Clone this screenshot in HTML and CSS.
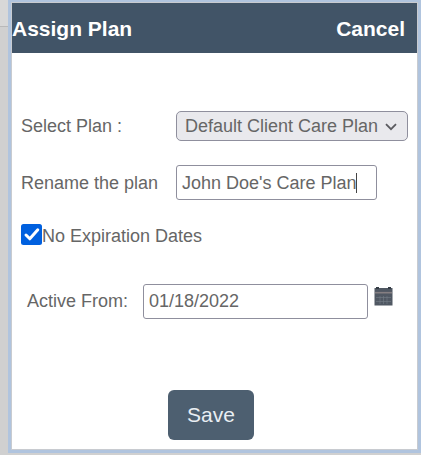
FILE: index.html
```html
<!DOCTYPE html>
<html lang="en">
<head>
  <meta charset="UTF-8" />
  <meta name="viewport" content="width=device-width,initial-scale=1.0"/>
  <title>Assign Plan</title>
  <link rel="stylesheet" href="styles.css">
</head>
<body>
  <div class="modal">
    <div class="modal-header">
      <span>Assign Plan</span>
      <span class="cancel">Cancel</span>
    </div>
    <form class="modal-body">
      <div class="row row-select">
        <label for="plan">Select Plan :</label>
        <div class="select-wrap">
          <select id="plan">
            <option>Default Client Care Plan</option>
          </select>
          <svg class="chevron" width="12" height="8" viewBox="0 0 12 8">
            <path d="M1 1.2 L6 6.2 L11 1.2" fill="none" stroke="#5b5b60" stroke-width="1.8"/>
          </svg>
        </div>
      </div>
      <div class="row row-name">
        <label for="name">Rename the plan</label>
        <div class="input-wrap">
          <input id="name" type="text" value="John Doe's Care Plan" />
          <span class="caret"></span>
        </div>
      </div>
      <div class="row row-check">
        <svg class="checkbox" width="21" height="21" viewBox="0 0 21 21">
          <rect width="21" height="21" rx="2.5" fill="#0060df"/>
          <path d="M5 11 L8.8 14.8 L16.8 5.8" fill="none" stroke="#fff" stroke-width="3" stroke-linecap="round" stroke-linejoin="round"/>
        </svg>
        <label>No Expiration Dates</label>
      </div>
      <div class="row row-date">
        <label for="from">Active From:</label>
        <input id="from" type="text" value="01/18/2022" />
        <svg class="calendar" width="19" height="19" viewBox="0 0 19 19">
          <rect x="0.5" y="1" width="18" height="17.5" fill="#505863"/>
          <path d="M2 0h3v2H2zM14 0h3v2h-3z" fill="#343c45"/>
          <path d="M1 5.7h17" stroke="#857f82" stroke-width="1.6"/>
          <path d="M2 10.5h15M2 14.5h15M6 9v8M9.5 9v8M13 9v8" stroke="#747d87" stroke-width="0.6"/>
        </svg>
      </div>
      <button type="button" class="save">Save</button>
    </form>
  </div>
</body>
</html>
```
FILE: styles.css
```css
* {
  box-sizing: border-box;
}
body {
  margin: 0;
  padding-left: 8px;
  height: 455px;
  overflow: hidden;
  font-family: "Liberation Sans", Arial, sans-serif;
  font-size: 18px;
  color: #666;
  background: linear-gradient(#d8d8d8 26px, #b9b9b9 26px, #b9b9b9 27px, #d0d0d0 27px);
}
.modal {
  height: 453px;
  padding: 2px 3px 3px;
  background: #b0c4de;
}
.modal-header {
  display: flex;
  justify-content: space-between;
  height: 51px;
  padding-top: 14px;
  border: 1px solid #c8cbd0;
  border-bottom: 0;
  line-height: 24px;
  font-size: 21px;
  font-weight: bold;
  color: #fff;
  background: #415467;
}
.cancel {
  padding-right: 12px;
}
.modal-body {
  display: flex;
  flex-direction: column;
  height: 397px;
  padding: 58px 9px 0;
  border: 1px solid #c8cbd0;
  border-top: 0;
  background: #fff;
}
.row {
  display: flex;
  align-items: center;
}
.row-select label,
.row-name label {
  width: 155px;
}
.row-name {
  margin-top: 24px;
}
.row-name label,
.row-name input {
  padding-top: 2px;
}
.row-check {
  margin-top: 24px;
  height: 21px;
}
.row-check label {
  padding-top: 3px;
}
.row-date {
  margin-top: 39px;
  padding-left: 6px;
}
.row-date label {
  width: 116px;
}
.select-wrap,
.input-wrap {
  position: relative;
}
select,
input {
  display: block;
  margin: 0;
  border: 1px solid #8f8f9d;
  font: inherit;
  color: #666;
}
select {
  width: 232px;
  height: 30px;
  padding: 0 8px;
  border-radius: 5px;
  background: #e9e9ed;
  appearance: none;
}
input {
  width: 201px;
  height: 35px;
  padding: 0 5px;
  border-radius: 3px;
  background: #fff;
}
.row-date input {
  width: 225px;
}
.chevron {
  position: absolute;
  top: 12px;
  right: 11px;
}
.caret {
  position: absolute;
  top: 8px;
  left: 180px;
  width: 1px;
  height: 20px;
  background: #444;
}
.checkbox {
  display: block;
}
.calendar {
  align-self: flex-start;
  margin: 3px 0 0 6px;
}
.save {
  width: 86px;
  height: 50px;
  margin: 71px 0 0 147px;
  padding: 0;
  border: 0;
  border-radius: 6px;
  font: 21px "Liberation Sans", Arial, sans-serif;
  color: #e9eef3;
  background: #4d5f70;
}
```
